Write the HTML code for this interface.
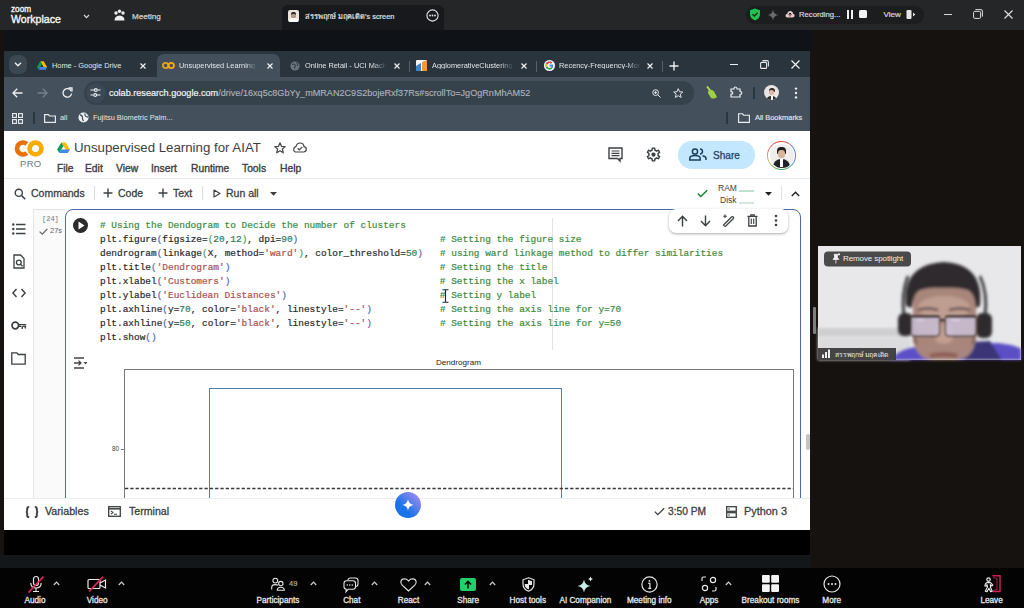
<!DOCTYPE html>
<html><head><meta charset="utf-8">
<style>
*{margin:0;padding:0;box-sizing:border-box}
html,body{width:1024px;height:608px;overflow:hidden;background:#161311;font-family:"Liberation Sans",sans-serif}
.a{position:absolute}
.t{position:absolute;white-space:nowrap;line-height:1}
svg{position:absolute;overflow:visible}
.lb{top:596.5px;font-size:8.2px;color:#e6e6e6;transform:translateX(-50%);-webkit-text-stroke:0.3px #e6e6e6}
</style></head><body>
<!-- ZOOM TOP BAR -->
<div class="a" style="left:0;top:0;width:1024px;height:30px;background:#252628"></div>
<div class="a" style="left:0;top:30px;width:812px;height:21px;background:#0f1317"></div>
<div class="a" style="left:812px;top:30px;width:212px;height:538px;background:#16120f"></div>
<div class="a" style="left:0;top:30px;width:4px;height:538px;background:#15120f"></div>


<!-- zoom logo -->
<div class="t" style="left:11px;top:6px;font-size:8.2px;color:#f2f2f2;-webkit-text-stroke:0.35px #f2f2f2">zoom</div>
<div class="t" style="left:11px;top:14px;font-size:10.6px;color:#f2f2f2;-webkit-text-stroke:0.4px #f2f2f2">Workplace</div>
<svg style="left:83px;top:14px" width="7" height="5" viewBox="0 0 7 5"><path d="M1 1 L3.5 3.6 L6 1" fill="none" stroke="#d8d8d8" stroke-width="1.2"/></svg>
<!-- meeting icon -->
<svg style="left:113px;top:9px" width="13" height="13" viewBox="0 0 13 13"><circle cx="3" cy="4" r="1.7" fill="#eee"/><circle cx="6.5" cy="2.3" r="1.7" fill="#eee"/><circle cx="10" cy="4" r="1.7" fill="#eee"/><path d="M1.5 11.5 Q1.5 7 6.5 6.5 Q11.5 7 11.5 11.5 Z" fill="#eee"/></svg>
<div class="t" style="left:132px;top:13px;font-size:8.1px;color:#cfcfcf;-webkit-text-stroke:0.25px #cfcfcf">Meeting</div>
<!-- share tab -->
<div class="a" style="left:282px;top:5px;width:162px;height:25px;background:#17191c;border-radius:6px 6px 0 0"></div>
<div class="a" style="left:288px;top:10px;width:11px;height:12px;background:#e9e4de;border-radius:2px;overflow:hidden"><div class="a" style="left:3px;top:1.5px;width:5px;height:3px;background:#2a2422;border-radius:2px 2px 0 0"></div><div class="a" style="left:3.2px;top:3.5px;width:4.6px;height:4px;background:#b59a8c;border-radius:1.5px"></div><div class="a" style="left:1px;top:8px;width:9px;height:5px;background:#fafafa;border-radius:3px 3px 0 0"></div></div>
<div class="t" style="left:305px;top:12.5px;font-size:7.4px;color:#e0e0e0;-webkit-text-stroke:0.2px #e0e0e0">สรรพฤกษ์ มฤคเดิด's screen</div>
<svg style="left:426px;top:9px" width="13" height="13" viewBox="0 0 13 13"><circle cx="6.5" cy="6.5" r="5.6" fill="none" stroke="#e6e6e6" stroke-width="1.1"/><circle cx="4" cy="6.5" r="0.9" fill="#e6e6e6"/><circle cx="6.5" cy="6.5" r="0.9" fill="#e6e6e6"/><circle cx="9" cy="6.5" r="0.9" fill="#e6e6e6"/></svg>
<!-- recording pill -->
<div class="a" style="left:746px;top:6px;width:178px;height:18px;background:#1c1d1f;border-radius:9px"></div>
<svg style="left:749px;top:8px" width="12" height="13" viewBox="0 0 12 13"><path d="M6 0.5 L11 2.3 L11 6 Q11 10.5 6 12.5 Q1 10.5 1 6 L1 2.3 Z" fill="#20c24f"/><path d="M3.5 6.3 L5.3 8 L8.6 4.8" fill="none" stroke="#0b2b14" stroke-width="1.4"/></svg>
<svg style="left:767px;top:9px" width="12" height="12" viewBox="0 0 12 12"><path d="M6 0.5 Q6.6 5.4 11.5 6 Q6.6 6.6 6 11.5 Q5.4 6.6 0.5 6 Q5.4 5.4 6 0.5Z" fill="#6a6b6d"/></svg>
<svg style="left:785px;top:10px" width="10" height="9" viewBox="0 0 10 9"><path d="M2.5 7.5 Q0.3 7.5 0.5 5.5 Q0.7 3.8 2.3 3.8 Q2.8 1 5.2 1 Q7.8 1 8 3.8 Q9.7 4 9.6 5.8 Q9.5 7.5 7.5 7.5 Z" fill="#e9c6cc"/><path d="M5 3 L5 6.5 M3.5 4.5 L5 3 L6.5 4.5" stroke="#1c1d1f" stroke-width="1" fill="none"/></svg>
<div class="t" style="left:799px;top:10.5px;font-size:7.7px;color:#dadada;-webkit-text-stroke:0.2px #dadada">Recording...</div>
<div class="a" style="left:847px;top:10px;width:2px;height:9px;background:#f2f2f2"></div>
<div class="a" style="left:851px;top:10px;width:2px;height:9px;background:#f2f2f2"></div>
<div class="a" style="left:859px;top:10px;width:8px;height:8px;background:#f2f2f2;border-radius:1.5px"></div>
<div class="t" style="left:883.5px;top:10.5px;font-size:8.1px;color:#dadada;-webkit-text-stroke:0.2px #dadada">View</div>
<svg style="left:906px;top:9px" width="10" height="11" viewBox="0 0 10 11"><rect x="0.5" y="1" width="5" height="9" rx="1" fill="#e6e6e6"/><path d="M7 3.5 L9.3 5.5 L7 7.5 Z" fill="#e6e6e6"/></svg>
<!-- window controls -->
<div class="a" style="left:944px;top:14px;width:8px;height:1px;background:#d8d8d8"></div>
<svg style="left:973px;top:9px" width="10" height="10" viewBox="0 0 10 10"><rect x="0.6" y="2.4" width="7" height="7" rx="1.2" fill="none" stroke="#dcdcdc" stroke-width="1"/><path d="M2.4 0.6 H8 Q9.4 0.6 9.4 2 V7.6" fill="none" stroke="#dcdcdc" stroke-width="1"/></svg>
<svg style="left:1004px;top:10px" width="9" height="9" viewBox="0 0 9 9"><path d="M0.5 0.5 L8.5 8.5 M8.5 0.5 L0.5 8.5" stroke="#e0e0e0" stroke-width="1.1"/></svg>

<!-- CHROME -->
<div id="chrome" class="a" style="left:4px;top:51px;width:806px;height:479px;background:#2a353e"></div>

<div class="a" style="left:4px;top:51px;width:806px;height:26px;background:#29343d"></div>
<!-- tab dropdown -->
<div class="a" style="left:9px;top:55px;width:18px;height:19px;background:#3b4751;border-radius:7px"></div>
<svg style="left:14px;top:62px" width="8" height="5" viewBox="0 0 8 5"><path d="M1 0.8 L4 3.8 L7 0.8" fill="none" stroke="#f0f0f0" stroke-width="1.4"/></svg>
<!-- tab1 -->
<svg style="left:37px;top:60.5px" width="10" height="9" viewBox="0 0 10 9"><path d="M3.3 0.3 H6.7 L10 6 L8.3 8.8 Z" fill="#fbbc04"/><path d="M3.3 0.3 L0 6 L1.7 8.8 L5 3.1Z" fill="#0f9d58"/><path d="M1.7 8.8 H8.3 L10 6 H3.4Z" fill="#4285f4"/></svg>
<div class="t" style="left:52px;top:61.5px;font-size:7.4px;color:#e3e6e8">Home - Google Drive</div>
<svg style="left:140px;top:62.5px" width="6" height="6" viewBox="0 0 6 6"><path d="M0.5 0.5 L5.5 5.5 M5.5 0.5 L0.5 5.5" stroke="#f0f0f0" stroke-width="1.2"/></svg>
<!-- active tab -->
<div class="a" style="left:157px;top:54px;width:123px;height:24px;background:#43505b;border-radius:7px 7px 0 0"></div>
<svg style="left:162px;top:60.5px" width="13" height="9" viewBox="0 0 13 9"><circle cx="3.6" cy="4.5" r="2.7" fill="none" stroke="#e8a317" stroke-width="1.8"/><circle cx="9.3" cy="4.5" r="2.7" fill="none" stroke="#f9ab00" stroke-width="1.8"/></svg>
<div class="t" style="left:179px;top:61.5px;font-size:7.4px;color:#e3e6e8;width:78px;overflow:hidden;-webkit-mask-image:linear-gradient(90deg,#000 85%,transparent)">Unsupervised Learning for AIAT</div>
<svg style="left:267px;top:62.5px" width="6" height="6" viewBox="0 0 6 6"><path d="M0.5 0.5 L5.5 5.5 M5.5 0.5 L0.5 5.5" stroke="#f0f0f0" stroke-width="1.2"/></svg>
<!-- tab3 -->
<svg style="left:290px;top:60.5px" width="10" height="10" viewBox="0 0 10 10"><circle cx="5" cy="5" r="4.6" fill="#6b747c"/><path d="M2 3.5 Q4 2.5 5 4 Q6 6 4 7.5 M6.5 1.5 Q8 3 7.5 5" stroke="#3b444c" stroke-width="1.2" fill="none"/></svg>
<div class="t" style="left:305px;top:61.5px;font-size:7.4px;color:#e3e6e8;width:82px;overflow:hidden;-webkit-mask-image:linear-gradient(90deg,#000 82%,transparent)">Online Retail - UCI Machine</div>
<svg style="left:394px;top:62.5px" width="6" height="6" viewBox="0 0 6 6"><path d="M0.5 0.5 L5.5 5.5 M5.5 0.5 L0.5 5.5" stroke="#f0f0f0" stroke-width="1.2"/></svg>
<div class="a" style="left:409px;top:60.5px;width:1px;height:11px;background:#55616b"></div>
<!-- tab4 -->
<svg style="left:416px;top:59.5px" width="11" height="11" viewBox="0 0 11 11"><rect x="0" y="0" width="11" height="11" rx="1" fill="#f7f7f7"/><path d="M0 11 V6 L5 3 V11Z" fill="#3d85c6"/><path d="M6 11 V2 L11 0 V11Z" fill="#f89939"/></svg>
<div class="t" style="left:432px;top:61.5px;font-size:7.4px;color:#e3e6e8;width:82px;overflow:hidden;-webkit-mask-image:linear-gradient(90deg,#000 82%,transparent)">AgglomerativeClustering</div>
<svg style="left:521px;top:62.5px" width="6" height="6" viewBox="0 0 6 6"><path d="M0.5 0.5 L5.5 5.5 M5.5 0.5 L0.5 5.5" stroke="#f0f0f0" stroke-width="1.2"/></svg>
<div class="a" style="left:536px;top:60.5px;width:1px;height:11px;background:#55616b"></div>
<!-- tab5 -->
<svg style="left:544px;top:59.5px" width="11" height="11" viewBox="0 0 11 11"><circle cx="5.5" cy="5.5" r="5.5" fill="#fff"/><path d="M9.2 4.6 H5.5 V6.4 H7.6 Q7.2 8 5.5 8 Q3 8 3 5.5 Q3 3 5.5 3 Q6.5 3 7.2 3.6 L8.4 2.4 Q7.2 1.4 5.5 1.4 Q1.4 1.4 1.4 5.5 Q1.4 9.6 5.5 9.6 Q9.4 9.6 9.2 4.6Z" fill="#4285f4"/><path d="M1.9 3.4 L3.4 4.5 Q4 3 5.5 3 Q6.5 3 7.2 3.6 L8.4 2.4 Q7.2 1.4 5.5 1.4 Q3 1.4 1.9 3.4Z" fill="#ea4335"/><path d="M1.9 3.4 Q1.2 5.5 1.9 7.6 L3.4 6.5 Q3 5.5 3.4 4.5Z" fill="#fbbc05"/><path d="M1.9 7.6 Q3 9.6 5.5 9.6 Q7.2 9.6 8.3 8.6 L6.9 7.5 Q6.4 8 5.5 8 Q4 8 3.4 6.5Z" fill="#34a853"/></svg>
<div class="t" style="left:559px;top:61.5px;font-size:7.4px;color:#e3e6e8;width:82px;overflow:hidden;-webkit-mask-image:linear-gradient(90deg,#000 82%,transparent)">Recency-Frequency-Monetary</div>
<svg style="left:647px;top:62.5px" width="6" height="6" viewBox="0 0 6 6"><path d="M0.5 0.5 L5.5 5.5 M5.5 0.5 L0.5 5.5" stroke="#f0f0f0" stroke-width="1.2"/></svg>
<div class="a" style="left:662px;top:60.5px;width:1px;height:11px;background:#55616b"></div>
<svg style="left:669px;top:60.5px" width="10" height="10" viewBox="0 0 10 10"><path d="M5 0.5 V9.5 M0.5 5 H9.5" stroke="#f0f0f0" stroke-width="1.4"/></svg>
<!-- chrome window controls -->
<div class="a" style="left:730px;top:64px;width:8px;height:1.2px;background:#eef0f1"></div>
<svg style="left:760px;top:60px" width="9" height="9" viewBox="0 0 9 9"><rect x="0.6" y="2.4" width="6" height="6" rx="1" fill="none" stroke="#e6e8ea" stroke-width="1.1"/><path d="M2.4 0.6 H7 Q8.4 0.6 8.4 2 V6.6" fill="none" stroke="#e6e8ea" stroke-width="1.1"/></svg>
<svg style="left:791px;top:60px" width="9" height="9" viewBox="0 0 9 9"><path d="M0.5 0.5 L8.5 8.5 M8.5 0.5 L0.5 8.5" stroke="#eef0f1" stroke-width="1.2"/></svg>

<!-- toolbar -->
<div class="a" style="left:4px;top:77px;width:806px;height:54px;background:#44515c"></div>
<svg style="left:12px;top:88px" width="11" height="10" viewBox="0 0 11 10"><path d="M10.5 5 H1.2 M5.2 0.8 L1 5 L5.2 9.2" fill="none" stroke="#eef0f1" stroke-width="1.3"/></svg>
<svg style="left:37px;top:88px" width="11" height="10" viewBox="0 0 11 10"><path d="M0.5 5 H9.8 M5.8 0.8 L10 5 L5.8 9.2" fill="none" stroke="#75808a" stroke-width="1.3"/></svg>
<svg style="left:62px;top:87px" width="11" height="11" viewBox="0 0 11 11"><path d="M9.3 4.2 A4.3 4.3 0 1 0 9.6 6.5" fill="none" stroke="#eef0f1" stroke-width="1.3"/><path d="M6.5 1 H10 V4.5" fill="none" stroke="#eef0f1" stroke-width="1.3"/></svg>
<div class="a" style="left:84px;top:81px;width:610px;height:24px;background:#35414b;border-radius:12px"></div>
<div class="a" style="left:86px;top:83px;width:20px;height:20px;background:#3c4853;border-radius:10px"></div>
<svg style="left:90px;top:88px" width="11" height="9" viewBox="0 0 11 9"><path d="M0.5 2 H4 M7.5 2 H10.5 M0.5 7 H3.5 M7 7 H10.5" stroke="#eef0f1" stroke-width="1.1"/><circle cx="5.8" cy="2" r="1.4" fill="none" stroke="#eef0f1" stroke-width="1.1"/><circle cx="5.2" cy="7" r="1.4" fill="none" stroke="#eef0f1" stroke-width="1.1"/></svg>
<div class="t" style="left:109px;top:88.5px;font-size:9.1px;color:#f1f3f4;-webkit-text-stroke:0.2px currentColor">colab.research.google.com<span style="color:#aab2b9;-webkit-text-stroke:0.15px #aab2b9">/drive/16xq5c8GbYy_mMRAN2C9S2bojeRxf37Rs#scrollTo=JgOgRnMhAM52</span></div>
<svg style="left:652px;top:88.5px" width="9" height="9" viewBox="0 0 10 10"><circle cx="4" cy="4" r="3.2" fill="none" stroke="#e6e8ea" stroke-width="1.1"/><path d="M6.4 6.4 L9.5 9.5 M4 2.4 V5.6 M2.4 4 H5.6" stroke="#e6e8ea" stroke-width="1.1"/></svg>
<svg style="left:673px;top:88px" width="10.5" height="10.5" viewBox="0 0 12 12"><path d="M6 0.8 L7.5 4.3 L11.2 4.6 L8.4 7 L9.3 10.8 L6 8.8 L2.7 10.8 L3.6 7 L0.8 4.6 L4.5 4.3 Z" fill="none" stroke="#e6e8ea" stroke-width="1.1" stroke-linejoin="round"/></svg>
<svg style="left:704px;top:85px" width="14" height="15" viewBox="0 0 14 15"><path d="M3 1.5 L6.5 6" stroke="#b5e655" stroke-width="1.8"/><path d="M5 5 Q8.5 4 10 6.5 L13 12 Q10.5 14.5 7 13 L4 8 Q3.8 6 5 5Z" fill="#9ed040"/></svg>
<svg style="left:730px;top:86px" width="12" height="12" viewBox="0 0 12 12"><path d="M1 3 H4 Q4 1 5.5 1 Q7 1 7 3 H10 V5.5 Q11.8 5.5 11.8 7 Q11.8 8.5 10 8.5 V11 H1 V8.3 Q2.8 8.3 2.8 7 Q2.8 5.7 1 5.7Z" fill="none" stroke="#eef0f1" stroke-width="1.2"/></svg>
<div class="a" style="left:753px;top:87px;width:1.5px;height:12px;background:#2c363e"></div>
<div class="a" style="left:764px;top:85px;width:15px;height:15px;background:#e8e6e4;border-radius:50%;overflow:hidden"><div class="a" style="left:4.5px;top:2.5px;width:6px;height:4px;background:#2b2522;border-radius:3px 3px 1px 1px"></div><div class="a" style="left:5px;top:5px;width:5px;height:5px;background:#dcb9a4;border-radius:2px"></div><div class="a" style="left:2px;top:10.5px;width:11px;height:6px;background:#2c3136;border-radius:5px 5px 0 0"></div><div class="a" style="left:6.5px;top:10.5px;width:2px;height:4px;background:#fff"></div></div>
<svg style="left:794px;top:87px" width="4" height="12" viewBox="0 0 4 12"><circle cx="2" cy="1.6" r="1.2" fill="#eef0f1"/><circle cx="2" cy="6" r="1.2" fill="#eef0f1"/><circle cx="2" cy="10.4" r="1.2" fill="#eef0f1"/></svg>

<!-- bookmarks bar -->
<svg style="left:12px;top:113px" width="11" height="11" viewBox="0 0 11 11"><rect x="0.6" y="0.6" width="3.8" height="3.8" fill="none" stroke="#eef0f1" stroke-width="1.1"/><rect x="6.6" y="0.6" width="3.8" height="3.8" fill="none" stroke="#eef0f1" stroke-width="1.1"/><rect x="0.6" y="6.6" width="3.8" height="3.8" fill="none" stroke="#eef0f1" stroke-width="1.1"/><rect x="6.6" y="6.6" width="3.8" height="3.8" fill="none" stroke="#eef0f1" stroke-width="1.1"/></svg>
<div class="a" style="left:33px;top:112px;width:1.5px;height:12px;background:#2c363e"></div>
<svg style="left:44px;top:114px" width="12" height="9" viewBox="0 0 12 9"><path d="M0.6 0.7 H4.4 L5.5 2 H11.4 V8.4 H0.6 Z" fill="none" stroke="#e6e8ea" stroke-width="1.2"/></svg>
<div class="t" style="left:60px;top:114px;font-size:7.4px;color:#e3e6e8">all</div>
<svg style="left:78px;top:112px" width="11" height="11" viewBox="0 0 11 11"><circle cx="5.5" cy="5.5" r="5" fill="#eef0f1"/><path d="M2 3 Q4 3 4.5 5 Q4 7 5.5 9 M7 1.5 Q6.5 3 8 4.5 Q9 5 10 5" stroke="#44515c" stroke-width="1.3" fill="none"/></svg>
<div class="t" style="left:93px;top:114px;font-size:7.4px;color:#e3e6e8">Fujitsu Biometric Palm...</div>
<div class="a" style="left:726px;top:112px;width:1.5px;height:12px;background:#2c363e"></div>
<svg style="left:738px;top:113px" width="12" height="10" viewBox="0 0 12 10"><path d="M0.6 0.8 H4.5 L5.7 2.2 H11.4 V9.4 H0.6 Z" fill="none" stroke="#eef0f1" stroke-width="1.1"/></svg>
<div class="t" style="left:755px;top:114px;font-size:7.4px;color:#e3e6e8;-webkit-text-stroke:0.15px #e3e6e8">All Bookmarks</div>


<!-- COLAB PAGE -->
<div class="a" style="left:4px;top:131px;width:806px;height:399px;background:#ffffff"></div>
<!-- header -->
<svg style="left:14px;top:140px" width="31" height="17" viewBox="0 0 31 17"><circle cx="21.5" cy="8.5" r="5.9" fill="none" stroke="#f9ab00" stroke-width="4.8"/><path d="M12.79 3.98 A5.9 5.9 0 1 0 12.79 13.02" fill="none" stroke="#e8710a" stroke-width="4.8"/></svg>
<div class="t" style="left:20px;top:159px;font-size:9.5px;color:#70757a;letter-spacing:0.3px">PRO</div>
<svg style="left:57px;top:142px" width="13" height="11" viewBox="0 0 13 11"><path d="M4.3 0.4 H8.7 L12.9 7.5 L10.7 11 Z" fill="#fbbc04"/><path d="M4.3 0.4 L0.1 7.5 L2.3 11 L6.5 3.9Z" fill="#0f9d58"/><path d="M2.3 11 H10.7 L12.9 7.5 H4.4Z" fill="#4285f4"/></svg>
<div class="t" style="left:74px;top:141px;font-size:13.25px;color:#3c4043">Unsupervised Learning for AIAT</div>
<svg style="left:274px;top:142px" width="12" height="12" viewBox="0 0 12 12"><path d="M6 0.8 L7.5 4.3 L11.2 4.6 L8.4 7 L9.3 10.8 L6 8.8 L2.7 10.8 L3.6 7 L0.8 4.6 L4.5 4.3 Z" fill="none" stroke="#444" stroke-width="1.2" stroke-linejoin="round"/></svg>
<svg style="left:293px;top:142px" width="14" height="11" viewBox="0 0 14 11"><path d="M3.5 10 Q0.6 10 0.7 7.2 Q0.8 5 3 4.6 Q3.8 1 7.2 1 Q10.6 1 11 4.6 Q13.3 5 13.3 7.3 Q13.2 10 10.5 10 Z" fill="none" stroke="#444" stroke-width="1.2"/><path d="M4.6 6.2 L6.3 7.8 L9.3 4.8" fill="none" stroke="#444" stroke-width="1.2"/></svg>
<div class="t" style="left:57px;top:164px;font-size:10.3px;color:#3c4043;-webkit-text-stroke:0.35px #3c4043">File</div>
<div class="t" style="left:85px;top:164px;font-size:10.3px;color:#3c4043;-webkit-text-stroke:0.35px #3c4043">Edit</div>
<div class="t" style="left:116px;top:164px;font-size:10.3px;color:#3c4043;-webkit-text-stroke:0.35px #3c4043">View</div>
<div class="t" style="left:151px;top:164px;font-size:10.3px;color:#3c4043;-webkit-text-stroke:0.35px #3c4043">Insert</div>
<div class="t" style="left:191px;top:164px;font-size:10.3px;color:#3c4043;-webkit-text-stroke:0.35px #3c4043">Runtime</div>
<div class="t" style="left:242px;top:164px;font-size:10.3px;color:#3c4043;-webkit-text-stroke:0.35px #3c4043">Tools</div>
<div class="t" style="left:280px;top:164px;font-size:10.3px;color:#3c4043;-webkit-text-stroke:0.35px #3c4043">Help</div>
<!-- header right -->
<svg style="left:608px;top:147px" width="15" height="15" viewBox="0 0 15 15"><path d="M1 1 H14 V11.5 H12 V14 L9.5 11.5 H1 Z" fill="none" stroke="#3c4043" stroke-width="1.4"/><path d="M3.5 4 H11.5 M3.5 6.3 H11.5 M3.5 8.6 H11.5" stroke="#3c4043" stroke-width="1.2"/></svg>
<svg style="left:645px;top:146px" width="17" height="17" viewBox="0 0 24 24"><path fill="#3c4043" d="M19.43 12.98c.04-.32.07-.64.07-.98 0-.34-.03-.66-.07-.98l2.11-1.65c.19-.15.24-.42.12-.64l-2-3.46a.5.5 0 0 0-.61-.22l-2.49 1c-.52-.4-1.08-.73-1.69-.98l-.38-2.650A.488.488 0 0 0 14 2h-4c-.25 0-.46.18-.49.42l-.38 2.65c-.61.25-1.17.59-1.69.98l-2.49-1a.566.566 0 0 0-.18-.03c-.17 0-.34.09-.43.25l-2 3.46c-.13.22-.07.49.12.64l2.11 1.65c-.04.32-.07.65-.07.98s.03.66.07.98l-2.11 1.65c-.19.15-.24.42-.12.64l2 3.46a.5.5 0 0 0 .61.22l2.49-1c.52.4 1.08.73 1.69.98l.38 2.65c.03.24.24.42.49.42h4c.25 0 .46-.18.49-.42l.38-2.65c.61-.25 1.170-.59 1.69-.98l2.49 1c.06.02.12.03.18.03.17 0 .34-.09.43-.25l2-3.46c.12-.22.07-.49-.12-.64l-2.11-1.65zm-1.98-1.71c.04.31.05.52.05.73 0 .21-.02.43-.05.73l-.14 1.13.89.7 1.08.84-.7 1.21-1.27-.51-1.04-.42-.9.68c-.43.32-.84.56-1.25.73l-1.06.43-.16 1.13-.2 1.35h-1.4l-.19-1.35-.16-1.130-1.06-.43c-.43-.18-.83-.41-1.23-.71l-.91-.7-1.06.43-1.27.51-.7-1.21 1.08-.84.89-.7-.14-1.13c-.03-.31-.05-.54-.05-.74s.02-.43.05-.73l.14-1.13-.89-.7-1.08-.84.7-1.21 1.27.51 1.04.42.9-.68c.43-.32.84-.56 1.25-.73l1.06-.43.16-1.13.2-1.35h1.39l.19 1.35.16 1.13 1.06.43c.43.18.83.41 1.23.71l.91.7 1.06-.43 1.27-.51.7 1.21-1.07.85-.89.7.14 1.13zM12 9c-1.66 0-3 1.34-3 3s1.34 3 3 3 3-1.34 3-3-1.34-3-3-3z"/></svg>
<div class="a" style="left:678px;top:141px;width:77px;height:28px;background:#c2e7ff;border-radius:14px"></div>
<svg style="left:689px;top:148px" width="18" height="13" viewBox="0 0 18 13"><circle cx="6" cy="3.5" r="2.6" fill="none" stroke="#1d3d5c" stroke-width="1.5"/><path d="M0.8 12 V10.5 Q0.8 7.6 6 7.6 Q11.2 7.6 11.2 10.5 V12 Z" fill="none" stroke="#1d3d5c" stroke-width="1.5"/><path d="M11 1 Q13.5 1.2 13.5 3.5 Q13.5 5.8 11 6" fill="none" stroke="#1d3d5c" stroke-width="1.5"/><path d="M13.5 7.8 Q17 8.4 17 10.5 V12" fill="none" stroke="#1d3d5c" stroke-width="1.5"/></svg>
<div class="t" style="left:713px;top:150.5px;font-size:10.1px;color:#1d3d5c;-webkit-text-stroke:0.25px #1d3d5c">Share</div>
<div class="a" style="left:767px;top:141px;width:29px;height:29px;border-radius:50%;background:conic-gradient(from -60deg,#e8716a 0%,#ea4335 12%,#c9605a 25%,#5b7fe0 32%,#4285f4 45%,#5aa878 60%,#34a853 70%,#b9cc6a 82%,#e8716a 100%)"></div>
<div class="a" style="left:768.2px;top:142.2px;width:26.6px;height:26.6px;border-radius:50%;background:#fff"></div>
<div class="a" style="left:769.5px;top:143.5px;width:24px;height:24px;border-radius:50%;background:#efeeed;overflow:hidden">
 <div class="a" style="left:7px;top:3px;width:9px;height:7px;background:#1e1b1a;border-radius:4px 4px 1px 1px"></div>
 <div class="a" style="left:8px;top:6px;width:7px;height:8px;background:#d9b49a;border-radius:3px"></div>
 <div class="a" style="left:3px;top:15px;width:17px;height:10px;background:#1f2328;border-radius:8px 8px 0 0"></div>
 <div class="a" style="left:10px;top:15px;width:3px;height:8px;background:#fff"></div>
</div>
<div class="a" style="left:4px;top:178px;width:806px;height:1px;background:#e6e7e8"></div>
<!-- colab toolbar -->
<svg style="left:14px;top:188px" width="12" height="12" viewBox="0 0 12 12"><circle cx="4.8" cy="4.8" r="3.6" fill="none" stroke="#3c4043" stroke-width="1.4"/><path d="M7.5 7.5 L11.2 11.2" stroke="#3c4043" stroke-width="1.6"/></svg>
<div class="t" style="left:31px;top:188px;font-size:10.5px;color:#3c4043;-webkit-text-stroke:0.3px #3c4043">Commands</div>
<div class="a" style="left:94px;top:186px;width:1px;height:14px;background:#dadce0"></div>
<svg style="left:103px;top:188px" width="10" height="10" viewBox="0 0 10 10"><path d="M5 0.5 V9.5 M0.5 5 H9.5" stroke="#3c4043" stroke-width="1.4"/></svg>
<div class="t" style="left:118px;top:188px;font-size:10.5px;color:#3c4043;-webkit-text-stroke:0.3px #3c4043">Code</div>
<svg style="left:158px;top:188px" width="10" height="10" viewBox="0 0 10 10"><path d="M5 0.5 V9.5 M0.5 5 H9.5" stroke="#3c4043" stroke-width="1.4"/></svg>
<div class="t" style="left:173px;top:188px;font-size:10.5px;color:#3c4043;-webkit-text-stroke:0.3px #3c4043">Text</div>
<div class="a" style="left:202px;top:186px;width:1px;height:14px;background:#dadce0"></div>
<svg style="left:213px;top:189px" width="8" height="9" viewBox="0 0 8 9"><path d="M1 1 L7 4.5 L1 8 Z" fill="none" stroke="#3c4043" stroke-width="1.2" stroke-linejoin="round"/></svg>
<div class="t" style="left:226px;top:188px;font-size:10.5px;color:#3c4043;-webkit-text-stroke:0.3px #3c4043">Run all</div>
<svg style="left:270px;top:192px" width="7" height="4" viewBox="0 0 7 4"><path d="M0 0 H7 L3.5 3.8Z" fill="#3c4043"/></svg>
<svg style="left:697px;top:189px" width="11" height="9" viewBox="0 0 11 9"><path d="M0.8 4.6 L3.8 7.6 L10.2 1.2" fill="none" stroke="#188038" stroke-width="1.4"/></svg>
<div class="t" style="left:718px;top:184px;font-size:8.5px;color:#3c4043">RAM</div>
<div class="t" style="left:720px;top:196px;font-size:8.5px;color:#3c4043">Disk</div>
<div class="a" style="left:739px;top:190px;width:15px;height:1.5px;background:#bfe0cc"></div>
<div class="a" style="left:739px;top:202px;width:15px;height:1.5px;background:#d6e8dd"></div>
<svg style="left:765px;top:192px" width="7" height="4" viewBox="0 0 7 4"><path d="M0 0 H7 L3.5 3.8Z" fill="#202124"/></svg>
<div class="a" style="left:781px;top:186px;width:1px;height:14px;background:#e3e3e3"></div>
<svg style="left:791px;top:191px" width="9" height="6" viewBox="0 0 9 6"><path d="M0.8 5 L4.5 1.2 L8.2 5" fill="none" stroke="#202124" stroke-width="1.4"/></svg>
<!-- sidebar -->
<div class="a" style="left:33px;top:208.5px;width:32px;height:290px;background:#fafafa;border-left:1px solid #e6e6e6;border-top:1px solid #e2e2e2"></div>
<svg style="left:12px;top:223px" width="14" height="12" viewBox="0 0 14 12"><circle cx="1.3" cy="1.5" r="1.2" fill="#3c4043"/><circle cx="1.3" cy="6" r="1.2" fill="#3c4043"/><circle cx="1.3" cy="10.5" r="1.2" fill="#3c4043"/><path d="M4 1.5 H13.5 M4 6 H13.5 M4 10.5 H13.5" stroke="#3c4043" stroke-width="1.4"/></svg>
<svg style="left:13px;top:254px" width="12" height="15" viewBox="0 0 12 15"><path d="M1 1 H7.5 L11 4.5 V14 H1 Z" fill="none" stroke="#3c4043" stroke-width="1.3"/><circle cx="5.8" cy="8.5" r="2.4" fill="none" stroke="#3c4043" stroke-width="1.3"/><path d="M7.5 10.2 L9.6 12.3" stroke="#3c4043" stroke-width="1.3"/></svg>
<svg style="left:12px;top:288px" width="14" height="10" viewBox="0 0 14 10"><path d="M4.5 1 L0.9 5 L4.5 9 M9.5 1 L13.1 5 L9.5 9" fill="none" stroke="#3c4043" stroke-width="1.4"/></svg>
<svg style="left:11px;top:320px" width="16" height="11" viewBox="0 0 16 11"><circle cx="4.3" cy="5.5" r="3.3" fill="none" stroke="#3c4043" stroke-width="1.7"/><path d="M7.6 4.6 H15.2 M7.6 6.4 H10 M12 6.4 H15.2 M11.2 6 V9 M14.3 6 V8.5" stroke="#3c4043" stroke-width="1.4"/></svg>
<svg style="left:11px;top:352px" width="15" height="13" viewBox="0 0 15 13"><path d="M0.8 0.8 H5.8 L7.3 2.5 H14.2 V12.2 H0.8 Z" fill="none" stroke="#3c4043" stroke-width="1.3"/></svg>
<!-- gutter -->
<div class="t" style="left:42px;top:215.5px;font-size:7px;color:#70757a;font-family:'Liberation Mono',monospace">[24]</div>
<svg style="left:39px;top:228px" width="9" height="7" viewBox="0 0 9 7"><path d="M0.6 3.6 L3.2 6.2 L8.4 0.8" fill="none" stroke="#5f6368" stroke-width="1.2"/></svg>
<div class="t" style="left:50px;top:227px;font-size:7.5px;color:#5f6368">27s</div>
<!-- cell -->
<div class="a" style="left:65px;top:209px;width:736px;height:330px;border:1.5px solid #4c6aa8;border-radius:8px"></div>
<div class="a" style="left:73px;top:218px;width:15px;height:15px;border-radius:50%;background:#2d2d2d"></div>
<svg style="left:78px;top:221px" width="7" height="9" viewBox="0 0 7 9"><path d="M0.5 0.5 L6.5 4.5 L0.5 8.5Z" fill="#fff"/></svg>
<div class="a" style="left:552px;top:218px;width:1px;height:132px;background:#e3e3e3"></div>

<pre class="a" style="left:100px;top:218.5px;font-family:'Liberation Mono',monospace;font-size:9.45px;line-height:14px;color:#2a2a2a;-webkit-text-stroke:0.2px currentColor"><span style="color:#3d8b3d"># Using the Dendogram to Decide the number of clusters</span>
plt.figure<span style="color:#5566b8">(</span>figsize=<span style="color:#4f9a4f">(</span><span style="color:#2f7a5c">20</span>,<span style="color:#2f7a5c">12</span><span style="color:#4f9a4f">)</span>, dpi=<span style="color:#2f7a5c">90</span><span style="color:#5566b8">)</span>                         <span style="color:#3d8b3d"># Setting the figure size</span>
dendrogram<span style="color:#5566b8">(</span>linkage<span style="color:#4f9a4f">(</span>X, method=<span style="color:#a8514f">&#x27;ward&#x27;</span><span style="color:#4f9a4f">)</span>, color_threshold=<span style="color:#2f7a5c">50</span><span style="color:#5566b8">)</span>   <span style="color:#3d8b3d"># using ward linkage method to differ similarities</span>
plt.title<span style="color:#5566b8">(</span><span style="color:#a8514f">&#x27;Dendrogram&#x27;</span><span style="color:#5566b8">)</span>                                     <span style="color:#3d8b3d"># Setting the title</span>
plt.xlabel<span style="color:#5566b8">(</span><span style="color:#a8514f">&#x27;Customers&#x27;</span><span style="color:#5566b8">)</span>                                     <span style="color:#3d8b3d"># Setting the x label</span>
plt.ylabel<span style="color:#5566b8">(</span><span style="color:#a8514f">&#x27;Euclidean Distances&#x27;</span><span style="color:#5566b8">)</span>                           <span style="color:#3d8b3d"># Setting y label</span>
plt.axhline<span style="color:#5566b8">(</span>y=<span style="color:#2f7a5c">70</span>, color=<span style="color:#a8514f">&#x27;black&#x27;</span>, linestyle=<span style="color:#a8514f">&#x27;--&#x27;</span><span style="color:#5566b8">)</span>            <span style="color:#3d8b3d"># Setting the axis line for y=70</span>
plt.axhline<span style="color:#5566b8">(</span>y=<span style="color:#2f7a5c">50</span>, color=<span style="color:#a8514f">&#x27;black&#x27;</span>, linestyle=<span style="color:#a8514f">&#x27;--&#x27;</span><span style="color:#5566b8">)</span>            <span style="color:#3d8b3d"># Setting the axis line for y=50</span>
plt.show<span style="color:#5566b8">()</span></pre>

<svg style="left:442px;top:289px" width="7" height="14" viewBox="0 0 7 14"><path d="M0.5 0.7 H6.5 M3.5 0.7 V13.3 M0.5 13.3 H6.5" stroke="#222" stroke-width="1.1" fill="none"/></svg>
<!-- cell toolbar -->
<div class="a" style="left:669px;top:209px;width:119px;height:24px;background:#fff;border-radius:7px;box-shadow:0 1px 3px rgba(60,64,67,.3),0 1px 2px rgba(60,64,67,.15)"></div>
<svg style="left:677px;top:215px" width="11" height="12" viewBox="0 0 11 12"><path d="M5.5 11.5 V1.5 M1 6 L5.5 1.3 L10 6" fill="none" stroke="#3c4043" stroke-width="1.4"/></svg>
<svg style="left:700px;top:215px" width="11" height="12" viewBox="0 0 11 12"><path d="M5.5 0.5 V10.5 M1 6 L5.5 10.7 L10 6" fill="none" stroke="#3c4043" stroke-width="1.4"/></svg>
<svg style="left:722px;top:214px" width="13" height="13" viewBox="0 0 13 13"><path d="M2.5 12 L1.5 11 L9.5 3 Q10.5 2.2 11.3 3 Q12 3.8 11.2 4.7 L3.3 12.5 Z" fill="none" stroke="#3c4043" stroke-width="1.3"/><path d="M3 0.5 V4 M1.2 2.2 H4.8" stroke="#3c4043" stroke-width="1.1"/></svg>
<svg style="left:747px;top:214px" width="11" height="13" viewBox="0 0 11 13"><path d="M0.5 2.3 H10.5 M3.8 2.3 V0.8 H7.2 V2.3" fill="none" stroke="#3c4043" stroke-width="1.2"/><path d="M1.8 2.5 V12 H9.2 V2.5" fill="none" stroke="#3c4043" stroke-width="1.3"/><path d="M4.3 4.5 V10 M6.7 4.5 V10" stroke="#3c4043" stroke-width="1.1"/></svg>
<svg style="left:774px;top:214px" width="4" height="13" viewBox="0 0 4 13"><circle cx="2" cy="2" r="1.3" fill="#3c4043"/><circle cx="2" cy="6.5" r="1.3" fill="#3c4043"/><circle cx="2" cy="11" r="1.3" fill="#3c4043"/></svg>
<!-- output icon -->
<svg style="left:73px;top:357px" width="15" height="12" viewBox="0 0 15 12"><path d="M1 1 H11 M1 11 H11" stroke="#444" stroke-width="1.3"/><path d="M1 6 H8 M5.5 3.6 L8 6 L5.5 8.4" fill="none" stroke="#444" stroke-width="1.3"/><path d="M10.5 5 H14.5 L12.5 7.5Z" fill="#444"/></svg>
<!-- chart -->
<div class="t" style="left:436px;top:359px;font-size:8.1px;color:#222">Dendrogram</div>
<div class="a" style="left:124px;top:369px;width:670px;height:140px;border:1px solid #777"></div>
<div class="a" style="left:209px;top:388px;width:352.5px;height:120px;border:1.2px solid #4f7fab;border-bottom:none"></div>
<div class="a" style="left:121px;top:449px;width:3px;height:1px;background:#777"></div>
<div class="t" style="left:112px;top:446px;font-size:6.5px;color:#444">80</div>
<svg style="left:125px;top:486px" width="668" height="5" viewBox="0 0 668 5"><path d="M0 2.6 H668" stroke="#3a3a3a" stroke-width="1.5" stroke-dasharray="3.3 2"/></svg>
<div class="a" style="left:806px;top:434px;width:4px;height:16px;background:#c4c4c4;border-radius:2px"></div>
<!-- status bar -->
<div class="a" style="left:4px;top:498px;width:806px;height:32px;background:#fff;border-top:1px solid #ececec"></div>
<svg style="left:25px;top:506px" width="14" height="12" viewBox="0 0 14 12"><path d="M4.2 0.9 Q2.2 0.9 2.2 2.6 V4.5 Q2.2 6 0.9 6 Q2.2 6 2.2 7.5 V9.4 Q2.2 11.1 4.2 11.1 M9.8 0.9 Q11.8 0.9 11.8 2.6 V4.5 Q11.8 6 13.1 6 Q11.8 6 11.8 7.5 V9.4 Q11.8 11.1 9.8 11.1" fill="none" stroke="#3c4043" stroke-width="1.9"/></svg>
<div class="t" style="left:45px;top:506px;font-size:10.7px;color:#3c4043;-webkit-text-stroke:0.3px #3c4043">Variables</div>
<svg style="left:108px;top:506px" width="13" height="11" viewBox="0 0 13 11"><rect x="0.7" y="0.7" width="11.6" height="9.6" fill="none" stroke="#3c4043" stroke-width="1.3"/><path d="M0.7 2.8 H12.3" stroke="#3c4043" stroke-width="1.5"/><path d="M3 5 L5 6.5 L3 8 M6 8.3 H9" fill="none" stroke="#3c4043" stroke-width="1.1"/></svg>
<div class="t" style="left:129px;top:506px;font-size:10.6px;color:#3c4043;-webkit-text-stroke:0.3px #3c4043">Terminal</div>
<div class="a" style="left:395px;top:492px;width:26px;height:26px;border-radius:50%;background:linear-gradient(45deg,#1a73e8 35%,#b890f2 100%)"></div>
<svg style="left:402px;top:499px" width="12" height="12" viewBox="0 0 12 12"><path d="M6 0.3 Q6.7 5.3 11.7 6 Q6.7 6.7 6 11.7 Q5.3 6.7 0.3 6 Q5.3 5.3 6 0.3Z" fill="#fff"/></svg>
<svg style="left:654px;top:507px" width="11" height="9" viewBox="0 0 11 9"><path d="M0.8 4.6 L3.8 7.6 L10.2 1.2" fill="none" stroke="#3c4043" stroke-width="1.3"/></svg>
<div class="t" style="left:668px;top:507px;font-size:10.2px;color:#3c4043;-webkit-text-stroke:0.3px #3c4043">3:50 PM</div>
<svg style="left:726px;top:506px" width="11" height="12" viewBox="0 0 11 12"><rect x="0.7" y="0.7" width="9.6" height="4.6" fill="none" stroke="#3c4043" stroke-width="1.3"/><rect x="0.7" y="6.7" width="9.6" height="4.6" fill="none" stroke="#3c4043" stroke-width="1.3"/><circle cx="3" cy="3" r="0.8" fill="#3c4043"/><circle cx="3" cy="9" r="0.8" fill="#3c4043"/></svg>
<div class="t" style="left:744px;top:506px;font-size:10.9px;color:#3c4043;-webkit-text-stroke:0.3px #3c4043">Python 3</div>

<!-- black under chrome -->
<div class="a" style="left:4px;top:530px;width:806px;height:25px;background:#000"></div>
<div class="a" style="left:4px;top:555px;width:806px;height:13px;background:#14171a"></div>
<div class="a" style="left:0;top:555px;width:4px;height:13px;background:#14171a"></div>

<!-- ZOOM BOTTOM BAR -->
<div class="a" style="left:0;top:568px;width:1024px;height:40px;background:#030303"></div>


<div class="a" style="left:813px;top:307px;width:3px;height:27px;background:#7d7d7d;border-radius:1px"></div>
<!-- VIDEO PANEL -->
<svg style="left:818px;top:246px" width="203" height="114" viewBox="0 0 203 114">
<defs>
<filter id="bl" x="-20%" y="-20%" width="140%" height="140%"><feGaussianBlur stdDeviation="1.8"/></filter>
<filter id="bl2" x="-20%" y="-20%" width="140%" height="140%"><feGaussianBlur stdDeviation="0.9"/></filter>
<radialGradient id="face" cx="0.5" cy="0.45" r="0.6"><stop offset="0" stop-color="#c09a8e"/><stop offset="0.7" stop-color="#a9857a"/><stop offset="1" stop-color="#8d6c62"/></radialGradient>
</defs>
<rect width="203" height="114" fill="#e8e8ea"/>
<rect x="0" y="82" width="92" height="9" fill="#cfcfd1" filter="url(#bl)"/>
<rect x="0" y="91" width="92" height="23" fill="#dcdcde" filter="url(#bl)"/>
<g filter="url(#bl)">
<path d="M74 114 Q78 104 98 101 L150 98 L180 97 Q198 99 203 103 L203 114 Z" fill="#5b4fc6"/>
<path d="M146 114 L150 96 L172 95 L184 114Z" fill="#3b3578"/>
<path d="M86 70 Q83 48 90 30" stroke="#3e3e40" stroke-width="3" fill="none"/>
<path d="M167 70 Q170 48 162 30" stroke="#3e3e40" stroke-width="3" fill="none"/>
<path d="M95 52 Q95 40 126 38 Q158 40 158 52 L158 92 Q156 108 146 112 L138 114 L114 114 L106 112 Q96 106 95 92 Z" fill="#a9867b"/>
<ellipse cx="126" cy="62" rx="26" ry="12" fill="#bf9e92"/>
<path d="M95 60 Q96 80 100 100 L95 96Z" fill="#8a6a60"/>
<path d="M158 60 Q157 80 153 100 L158 96Z" fill="#8a6a60"/>
<path d="M88 60 Q84 18 126 16 Q166 18 162 60 L158 62 Q157 48 150 44 Q138 41 126 42 Q112 41 102 44 Q95 48 94 62 Z" fill="#2d2c2e"/>
<rect x="80" y="67" width="15" height="23" rx="6" fill="#2e2c2d"/>
<rect x="158" y="67" width="16" height="25" rx="6" fill="#2e2c2d"/>
<path d="M118 78 Q116 92 119 96 Q126 99 133 96 Q136 92 134 78Z" fill="#c29e92"/>
<path d="M100 64 Q110 61 120 64 M131 64 Q142 61 152 64" stroke="#5a4440" stroke-width="2.4" fill="none"/>
<path d="M111 108 Q126 104 140 108 L138 112 Q126 110 113 112Z" fill="#8d5e58"/>
</g>
<g filter="url(#bl2)">
<path d="M93 72 Q93 70 96 70 H119.5 Q121.5 70 121.5 72 V86 Q121.5 90 118 90 H97 Q93 90 93 86 Z" fill="#cdc4dc" fill-opacity="0.8" stroke="#54423f" stroke-width="1.4"/>
<path d="M127.5 72 Q127.5 70 130 70 H156 Q158 70 158 72 V86 Q158 90 154.5 90 H131 Q127.5 90 127.5 86 Z" fill="#cdc4dc" fill-opacity="0.8" stroke="#54423f" stroke-width="1.4"/>
<path d="M93 71 H121.5 M127.5 71 H158" stroke="#3a2e2e" stroke-width="2.2"/>
<path d="M121.5 75 Q124.5 72.5 127.5 75" stroke="#3b3031" stroke-width="2" fill="none"/>
<path d="M99 74 L106 74 M134 74 L142 74" stroke="#e8e4f0" stroke-width="1.5" opacity="0.7"/>
</g>
<rect x="6" y="5.5" width="87" height="15" rx="4" fill="#4a4a4a"/>
<path d="M16.2 8.3 L19.8 8.3 L19.2 11.3 L20.8 13.4 L15 13.4 L16.6 11.3 Z M17.9 13.4 V17.5" fill="#f2f2f2" stroke="#f2f2f2" stroke-width="0.8"/>
<circle cx="21" cy="8.3" r="1.1" fill="#f2f2f2"/>
<rect x="0" y="102" width="78" height="12" fill="#3b3b3b" opacity="0.95"/>
<rect x="4" y="108.5" width="2" height="3.5" fill="#eee"/><rect x="7" y="106" width="2" height="6" fill="#eee"/><rect x="10" y="103.5" width="2" height="8.5" fill="#eee"/>
</svg>
<div class="t" style="left:843px;top:255px;font-size:8px;color:#f0f0f0;letter-spacing:-0.1px">Remove spotlight</div>
<div class="t" style="left:835px;top:351.5px;font-size:6.8px;color:#eaeaea">สรรพฤกษ์ มฤคเดิด</div>
<!-- BOTTOM TOOLBAR ICONS -->
<svg style="left:27px;top:575px" width="18" height="18" viewBox="0 0 18 18"><rect x="6.5" y="1.5" width="5" height="9" rx="2.5" fill="none" stroke="#e6e6e6" stroke-width="1.2"/><path d="M3.8 8 Q3.8 13 9 13 Q14.2 13 14.2 8 M9 13 V16.5 M6 16.5 H12" fill="none" stroke="#e6e6e6" stroke-width="1.2"/><path d="M1.5 17.5 L16.5 1.5" stroke="#e2245c" stroke-width="1.8"/></svg>
<svg style="left:53px;top:581px" width="7" height="5" viewBox="0 0 7 5"><path d="M0.8 4 L3.5 1.2 L6.2 4" fill="none" stroke="#d0d0d0" stroke-width="1.2"/></svg>
<div class="t lb" style="left:35px">Audio</div>
<svg style="left:87px;top:576px" width="20" height="16" viewBox="0 0 20 16"><rect x="1" y="3.5" width="12" height="9" rx="1" fill="none" stroke="#e6e6e6" stroke-width="1.2"/><path d="M13 7 L18.5 4 V12 L13 9" fill="none" stroke="#e6e6e6" stroke-width="1.2"/><path d="M2 15.5 L16 0.8" stroke="#e2245c" stroke-width="1.8"/></svg>
<svg style="left:118px;top:581px" width="7" height="5" viewBox="0 0 7 5"><path d="M0.8 4 L3.5 1.2 L6.2 4" fill="none" stroke="#d0d0d0" stroke-width="1.2"/></svg>
<div class="t lb" style="left:97.2px">Video</div>

<svg style="left:271px;top:577px" width="14" height="14" viewBox="0 0 14 14"><circle cx="4.3" cy="3.6" r="2.4" fill="none" stroke="#e6e6e6" stroke-width="1.1"/><path d="M0.7 12.5 V10.5 Q0.7 7.6 4.3 7.6 Q6 7.6 7 8.3" fill="none" stroke="#e6e6e6" stroke-width="1.1"/><circle cx="9.8" cy="6.6" r="2.2" fill="none" stroke="#e6e6e6" stroke-width="1.1"/><path d="M6.3 13.2 Q6.3 10.2 9.8 10.2 Q13.3 10.2 13.3 13.2 Z" fill="none" stroke="#e6e6e6" stroke-width="1.1"/></svg>
<div class="t" style="left:289px;top:579.5px;font-size:7.5px;color:#a8a8a8;-webkit-text-stroke:0.2px #a8a8a8">49</div>
<svg style="left:310px;top:581px" width="7" height="5" viewBox="0 0 7 5"><path d="M0.8 4 L3.5 1.2 L6.2 4" fill="none" stroke="#d0d0d0" stroke-width="1.2"/></svg>
<div class="t lb" style="left:278px">Participants</div>
<svg style="left:343px;top:577px" width="16" height="16" viewBox="0 0 16 16"><path d="M5 3 Q5 1 7.5 1 H12.5 Q15 1 15 3.5 V7 Q15 9.5 12.5 9.5" fill="none" stroke="#e6e6e6" stroke-width="1.1"/><path d="M3.5 3.8 H10 Q12.5 3.8 12.5 6.3 V9.8 Q12.5 12.3 10 12.3 H5 L3 14.8 L3.2 12.2 Q1 12 1 9.8 V6.3 Q1 3.8 3.5 3.8 Z" fill="none" stroke="#e6e6e6" stroke-width="1.1"/><circle cx="4.3" cy="8" r="0.8" fill="#e6e6e6"/><circle cx="6.8" cy="8" r="0.8" fill="#e6e6e6"/><circle cx="9.3" cy="8" r="0.8" fill="#e6e6e6"/></svg>
<svg style="left:371px;top:581px" width="7" height="5" viewBox="0 0 7 5"><path d="M0.8 4 L3.5 1.2 L6.2 4" fill="none" stroke="#d0d0d0" stroke-width="1.2"/></svg>
<div class="t lb" style="left:351.8px">Chat</div>
<svg style="left:400px;top:578px" width="17" height="14" viewBox="0 0 17 14"><path d="M8.5 13 L2.2 7.2 Q0.4 5.4 0.9 3.4 Q1.5 1 4.3 0.8 Q6.8 0.8 8.5 3 Q10.2 0.8 12.7 0.8 Q15.5 1 16.1 3.4 Q16.6 5.4 14.8 7.2 Z" fill="none" stroke="#e6e6e6" stroke-width="1.1"/></svg>
<svg style="left:424px;top:581px" width="7" height="5" viewBox="0 0 7 5"><path d="M0.8 4 L3.5 1.2 L6.2 4" fill="none" stroke="#d0d0d0" stroke-width="1.2"/></svg>
<div class="t lb" style="left:408.5px">React</div>
<div class="a" style="left:460px;top:578px;width:16px;height:13px;background:#20d16a;border-radius:2px"></div>
<svg style="left:464px;top:580px" width="8" height="9" viewBox="0 0 8 9"><path d="M4 8.5 V2 M1 4.5 L4 1.3 L7 4.5" fill="none" stroke="#0a0a0a" stroke-width="1.6"/></svg>
<svg style="left:489px;top:581px" width="7" height="5" viewBox="0 0 7 5"><path d="M0.8 4 L3.5 1.2 L6.2 4" fill="none" stroke="#d0d0d0" stroke-width="1.2"/></svg>
<div class="t lb" style="left:468.2px">Share</div>
<svg style="left:522px;top:577px" width="13" height="15" viewBox="0 0 13 15"><path d="M6.5 0.8 L12 2.8 V7 Q12 12 6.5 14.2 Q1 12 1 7 V2.8 Z" fill="none" stroke="#e6e6e6" stroke-width="1.2"/><path d="M6.5 3 V12 Q3 10.5 3 7.5 H6.5 M6.5 7.5 H10" fill="none" stroke="#e6e6e6" stroke-width="1"/><path d="M6.5 3 L10 4.3 V7.5 H6.5 Z" fill="#e6e6e6"/><path d="M3 7.5 Q3 10.5 6.5 12 V7.5 Z" fill="#e6e6e6"/></svg>
<div class="t lb" style="left:527.8px">Host tools</div>
<svg style="left:577px;top:576px" width="17" height="17" viewBox="0 0 17 17"><path d="M7 3.5 Q7.8 9.2 13.5 10 Q7.8 10.8 7 16.5 Q6.2 10.8 0.5 10 Q6.2 9.2 7 3.5Z" fill="#c5efe6"/><path d="M13.5 0.5 Q13.9 2.7 16 3 Q13.9 3.4 13.5 5.5 Q13.1 3.4 11 3 Q13.1 2.7 13.5 0.5Z" fill="#e6f7f3"/></svg>
<div class="t lb" style="left:585.4px">AI Companion</div>
<svg style="left:641px;top:576px" width="17" height="17" viewBox="0 0 17 17"><circle cx="8.5" cy="8.5" r="7.6" fill="none" stroke="#e6e6e6" stroke-width="1.2"/><circle cx="8.5" cy="4.9" r="0.9" fill="#e6e6e6"/><path d="M7.2 7.3 H8.9 V12.3 M7.2 12.3 H10.2" fill="none" stroke="#e6e6e6" stroke-width="1.2"/></svg>
<div class="t lb" style="left:649.3px">Meeting info</div>
<svg style="left:701px;top:576px" width="16" height="16" viewBox="0 0 16 16"><path d="M1 5 V2.5 Q1 1 2.5 1 H5 M11 15 H13.5 Q15 15 15 13.5 V11" fill="none" stroke="#e6e6e6" stroke-width="1.2"/><circle cx="12" cy="4" r="2.6" fill="none" stroke="#e6e6e6" stroke-width="1.2"/><circle cx="4" cy="12" r="2.6" fill="none" stroke="#e6e6e6" stroke-width="1.2"/></svg>
<svg style="left:725px;top:581px" width="7" height="5" viewBox="0 0 7 5"><path d="M0.8 4 L3.5 1.2 L6.2 4" fill="none" stroke="#d0d0d0" stroke-width="1.2"/></svg>
<div class="t lb" style="left:709.1px">Apps</div>
<svg style="left:762px;top:575px" width="17" height="17" viewBox="0 0 17 17"><rect x="0" y="0" width="7.8" height="7.8" rx="1" fill="#f4f4f4"/><rect x="9.2" y="0" width="7.8" height="7.8" rx="1" fill="#f4f4f4"/><rect x="0" y="9.2" width="7.8" height="7.8" rx="1" fill="#f4f4f4"/><rect x="9.2" y="9.2" width="7.8" height="7.8" rx="1" fill="#f4f4f4"/></svg>
<div class="t lb" style="left:770.5px">Breakout rooms</div>
<svg style="left:823px;top:575px" width="18" height="18" viewBox="0 0 18 18"><circle cx="9" cy="9" r="8" fill="none" stroke="#e6e6e6" stroke-width="1.2"/><circle cx="5.5" cy="9" r="1" fill="#e6e6e6"/><circle cx="9" cy="9" r="1" fill="#e6e6e6"/><circle cx="12.5" cy="9" r="1" fill="#e6e6e6"/></svg>
<div class="t lb" style="left:831.7px">More</div>
<svg style="left:983px;top:575px" width="18" height="18" viewBox="0 0 18 18"><path d="M9.5 0.8 H17 V16.6 H9.5" fill="none" stroke="#d01a5c" stroke-width="1.5"/><path d="M10 2.5 L14 3.5 V14.5 L10 15.5" fill="none" stroke="#b01550" stroke-width="1"/><circle cx="5.5" cy="4.6" r="1.7" fill="none" stroke="#eee" stroke-width="1.2"/><path d="M4 7.5 Q2 8.5 1.8 11 L3.2 11.3 L4 9.5 L4.5 12 L2.3 16.2 L4 16.6 L6 13.3 L7.5 16.6 L9.2 16.2 L7.4 12 V9.6 L8.8 11 L9.8 10 L7.6 7.6 Z" fill="none" stroke="#eee" stroke-width="1.1" stroke-linejoin="round"/></svg>
<div class="t lb" style="left:991.6px">Leave</div>

</body></html>
